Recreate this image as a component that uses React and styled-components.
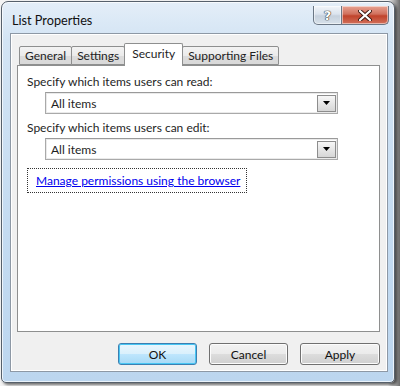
import styled, { createGlobalStyle } from "styled-components";

const GlobalStyle = createGlobalStyle`
  html, body {
    margin: 0;
    padding: 0;
    background: #f4f4f4;
  }
  body {
    font-family: Lato, "Open Sans", Arial, sans-serif;
    font-size: 12px;
    color: #1e1e1e;
  }
`;

const Stage = styled.div`
  width: 400px;
  height: 386px;
  padding: 1px 5px 3px 1px;
  box-sizing: border-box;
  display: flex;
  background: linear-gradient(90deg, #f4f4f4 0%, #f4f4f4 97%, #6d6d6d 100%);
`;

const Window = styled.div`
  flex: 1;
  display: flex;
  flex-direction: column;
  border: 1px solid #56606b;
  border-radius: 7px 7px 5px 5px;
  background: linear-gradient(180deg, #e4eef8 0%, #d3e4f4 10%, #c4dbf1 60%, #bcd6ef 100%);
  box-shadow: 2px 2px 3px rgba(0, 0, 0, 0.55), inset 0 0 0 1px rgba(255, 255, 255, 0.7);
  overflow: hidden;
`;

const TitleBar = styled.div`
  height: 31px;
  display: flex;
  align-items: flex-start;
  justify-content: space-between;
  padding: 0 5px 0 10px;
`;

const Title = styled.div`
  font-size: 12.7px;
  line-height: 1;
  color: #111;
  margin-top: 12px;
`;

const Controls = styled.div`
  display: flex;
  margin-top: 4px;
`;

const CaptionButton = styled.div`
  height: 18px;
  width: ${({ $wide }) => ($wide ? "46px" : "27px")};
  display: flex;
  align-items: center;
  justify-content: center;
  border: 1px solid #6b7785;
  border-top: none;
  border-radius: ${({ $wide }) => ($wide ? "0 0 5px 0" : "0 0 0 5px")};
  background: ${({ $wide }) =>
    $wide
      ? "linear-gradient(180deg, #e8a493 0%, #d0705d 45%, #c0432b 55%, #d2705a 100%)"
      : "linear-gradient(180deg, #f2f5f9 0%, #dbe4ee 45%, #c6d1dd 55%, #d7e1ea 100%)"};
  box-shadow: inset 0 0 0 1px rgba(255, 255, 255, 0.5);
  ${({ $wide }) => ($wide ? "border-left: none;" : "")}
`;

const HelpGlyph = styled.span`
  font-family: "DejaVu Sans", sans-serif;
  font-weight: bold;
  font-size: 13px;
  color: #fff;
  text-shadow: 0 0 1px #333, 0 0 1px #333, 0 0 1px #333;
`;

const Client = styled.div`
  flex: 1;
  margin: 0 6px 10px 8px;
  border: 1px solid #8d98a5;
  background: #f0f0f0;
  box-shadow: inset 0 0 0 1px #ffffff;
  display: flex;
  flex-direction: column;
  padding: 9px 7px 6px 6px;
`;

const TabStrip = styled.div`
  display: flex;
  align-items: flex-end;
  padding-left: 3px;
  height: 22px;
  position: relative;
  z-index: 1;
`;

const Tab = styled.div`
  height: ${({ $active }) => ($active ? "22px" : "17px")};
  display: flex;
  padding: 0 ${({ $active }) => ($active ? "7px" : "5px")};
  border: 1px solid #8e8f8f;
  border-bottom: ${({ $active }) => ($active ? "none" : "1px solid #8e8f8f")};
  margin-left: -1px;
  margin-bottom: ${({ $active }) => ($active ? "-1px" : "0")};
  background: ${({ $active }) =>
    $active ? "#ffffff" : "linear-gradient(180deg, #f3f3f3 0%, #ebebeb 50%, #dcdcdc 51%, #d9d9d9 100%)"};
  border-radius: 2px 2px 0 0;
  font-size: 12px;
  white-space: nowrap;
  align-items: ${({ $active }) => ($active ? "flex-start" : "center")};
  line-height: ${({ $active }) => ($active ? "19px" : "normal")};
`;

const Panel = styled.div`
  flex: 1;
  background: #fff;
  border: 1px solid #8e8f8f;
  display: flex;
  flex-direction: column;
  padding: 7px 9px 0 9px;
`;

const Label = styled.div`
  font-size: 12px;
  line-height: 18px;
`;

const Select = styled.div`
  margin: 1px 32px 5px 18px;
  height: 22px;
  box-sizing: border-box;
  border: 1px solid #a9a9a9;
  border-top-color: #9a9a9a;
  display: flex;
  align-items: center;
  justify-content: space-between;
  padding: 0 1px 0 5px;
  background: #fff;
  box-shadow: inset 0 0 0 1px #eaeaea;
`;

const SelectValue = styled.span`
  font-size: 12px;
`;

const Arrow = styled.div`
  width: 19px;
  height: 17px;
  box-sizing: border-box;
  border: 1px solid #8d8d8d;
  background: linear-gradient(180deg, #f7f7f7 0%, #e6e6e6 50%, #d6d6d6 100%);
  display: flex;
  align-items: center;
  justify-content: center;
`;

const LinkBox = styled.div`
  align-self: flex-start;
  margin-top: 3px;
  width: 220px;
  height: 25px;
  box-sizing: border-box;
  border: 1px dotted #333;
  display: flex;
  align-items: center;
  padding-left: 8px;
  white-space: nowrap;
`;

const Link = styled.a`
  color: #0000ee;
  text-decoration: underline;
  font-size: 12px;
  cursor: pointer;
`;

const ButtonRow = styled.div`
  display: flex;
  justify-content: flex-end;
  gap: 12px;
  margin-top: 11px;
`;

const Button = styled.button`
  width: ${({ $w }) => $w}px;
  height: 22px;
  border-radius: 3px;
  border: 1px solid ${({ $default }) => ($default ? "#3c7fb1" : "#707070")};
  background: ${({ $default }) =>
    $default
      ? "linear-gradient(180deg, #eaf6fd 0%, #d9f0fc 50%, #bee6fd 51%, #a7d9f5 100%)"
      : "linear-gradient(180deg, #f2f2f2 0%, #ebebeb 50%, #dddddd 51%, #cfcfcf 100%)"};
  box-shadow: inset 0 0 0 1px ${({ $default }) => ($default ? "#48c6f3" : "#fcfcfc")};
  font-family: Lato, "Open Sans", sans-serif;
  font-size: 12px;
  color: #111;
  padding: 0;
`;

const ArrowIcon = () => (
  <svg width="7" height="4" viewBox="0 0 7 4">
    <path d="M0 0 H7 L3.5 4 Z" fill="#000" />
  </svg>
);

const CloseIcon = () => (
  <svg width="14" height="11" viewBox="0 0 14 11">
    <path
      d="M2 1 L12 10 M12 1 L2 10"
      stroke="#3d1a14"
      strokeWidth="4"
      strokeLinecap="round"
    />
    <path
      d="M2 1 L12 10 M12 1 L2 10"
      stroke="#fff"
      strokeWidth="2.2"
      strokeLinecap="round"
    />
  </svg>
);

const tabs = ["General", "Settings", "Security", "Supporting Files"];

export default function App() {
  return (
    <>
      <GlobalStyle />
      <Stage>
        <Window>
          <TitleBar>
            <Title>List Properties</Title>
            <Controls>
              <CaptionButton>
                <HelpGlyph>?</HelpGlyph>
              </CaptionButton>
              <CaptionButton $wide>
                <CloseIcon />
              </CaptionButton>
            </Controls>
          </TitleBar>
          <Client>
            <TabStrip>
              {tabs.map((t) => (
                <Tab key={t} $active={t === "Security"}>
                  {t}
                </Tab>
              ))}
            </TabStrip>
            <Panel>
              <Label>Specify which items users can read:</Label>
              <Select>
                <SelectValue>All items</SelectValue>
                <Arrow>
                  <ArrowIcon />
                </Arrow>
              </Select>
              <Label>Specify which items users can edit:</Label>
              <Select>
                <SelectValue>All items</SelectValue>
                <Arrow>
                  <ArrowIcon />
                </Arrow>
              </Select>
              <LinkBox>
                <Link>Manage permissions using the browser</Link>
              </LinkBox>
            </Panel>
            <ButtonRow>
              <Button $w={79} $default>
                OK
              </Button>
              <Button $w={79}>Cancel</Button>
              <Button $w={80}>Apply</Button>
            </ButtonRow>
          </Client>
        </Window>
      </Stage>
    </>
  );
}
